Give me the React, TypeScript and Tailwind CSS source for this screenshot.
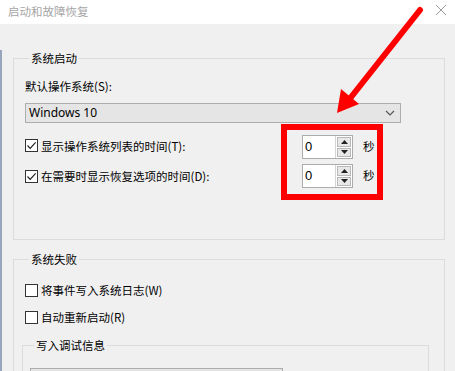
const FONT = { fontFamily: '"Noto Sans CJK SC", "Noto Sans", sans-serif' };

const CheckBox = ({ checked }: { checked: boolean }) => (
  <span className="flex h-[13px] w-[13px] shrink-0 items-center justify-center border border-[#333333] bg-white">
    {checked && (
      <svg width="11" height="11" viewBox="0 0 11 11">
        <path d="M1.5 5.5 L4.2 8.3 L9.6 2.4" fill="none" stroke="#222" strokeWidth="1.2" />
      </svg>
    )}
  </span>
);

const Check = ({ checked, label }: { checked: boolean; label: string }) => (
  <div className="flex items-center gap-[3px]">
    <CheckBox checked={checked} />
    <span className="leading-[16px]">{label}</span>
  </div>
);

const Spin = () => (
  <div className="flex h-[24px] w-[51px] border border-[#acacac] bg-white">
    <span className="flex-1 pl-[2px] text-[13px] leading-[22px]" style={{ fontFamily: '"Liberation Sans", sans-serif' }}>
      0
    </span>
    <div className="flex w-[17px] flex-col gap-[1px] border-l border-[#d4d4d4] p-[1px]">
      <div className="flex flex-1 items-center justify-center border border-[#b8b8b8] bg-[#e8e8e8]">
        <svg width="7" height="4" viewBox="0 0 7 4">
          <path d="M0 4 L3.5 0 L7 4 Z" fill="#222" />
        </svg>
      </div>
      <div className="flex flex-1 items-center justify-center border border-[#b8b8b8] bg-[#e8e8e8]">
        <svg width="7" height="4" viewBox="0 0 7 4">
          <path d="M0 0 L3.5 4 L7 0 Z" fill="#222" />
        </svg>
      </div>
    </div>
  </div>
);

const Chevron = () => (
  <svg width="10" height="6" viewBox="0 0 10 6">
    <path d="M1 1 L5 5 L9 1" fill="none" stroke="#555" strokeWidth="1.2" />
  </svg>
);

export default function App() {
  return (
    <div className="relative h-[371px] w-[455px] overflow-hidden bg-[#f0f0f0] text-[11.5px] text-black" style={FONT}>
      {/* title bar */}
      <div className="flex h-[24px] items-center justify-between bg-white pl-[8px] pr-[8px]">
        <span className="text-[#a6a6a6]">启动和故障恢复</span>
        <svg width="12" height="12" viewBox="0 0 12 12" className="-mt-[4px]">
          <path d="M1 1 L11 11 M11 1 L1 11" stroke="#9a9a9a" strokeWidth="1" />
        </svg>
      </div>

      <div className="border-l-2 border-[#97a6bd] pb-[20px]">
        {/* 系统启动 */}
        <fieldset className="ml-[11px] mt-[26px] w-[432px] border border-[#dcdcdc] pb-[51px] pl-[11px]">
          <legend className="ml-[4px] px-[2px] leading-[16px]">系统启动</legend>
          <div className="mt-[12px] leading-[16px]">默认操作系统(S):</div>
          <div className="mt-[9px] flex h-[20px] w-[376px] items-center justify-between border border-[#adadad] bg-[#e5e5e5] pl-[3px] pr-[5px]">
            <span className="text-[12px]" style={{ fontFamily: '"Noto Sans", sans-serif' }}>
              Windows 10
            </span>
            <Chevron />
          </div>
          <div className="mt-[12px] flex items-center">
            <div className="-mt-[3px] w-[277px]">
              <Check checked label="显示操作系统列表的时间(T):" />
            </div>
            <Spin />
            <span className="ml-[10px]">秒</span>
          </div>
          <div className="mt-[5px] flex items-center">
            <div className="w-[277px]">
              <Check checked label="在需要时显示恢复选项的时间(D):" />
            </div>
            <Spin />
            <span className="ml-[10px]">秒</span>
          </div>
        </fieldset>

        {/* 系统失败 */}
        <fieldset className="ml-[11px] mt-[11px] w-[432px] border border-[#dcdcdc] pl-[11px]">
          <legend className="ml-[4px] px-[2px] leading-[16px]">系统失败</legend>
          <div className="mt-[15px]">
            <Check checked={false} label="将事件写入系统日志(W)" />
          </div>
          <div className="mt-[11px]">
            <Check checked={false} label="自动重新启动(R)" />
          </div>
          <fieldset className="-ml-[3px] mt-[12px] w-[407px] border border-[#dcdcdc] pb-[10px] pl-[7px]">
            <legend className="ml-[4px] px-[2px] leading-[16px]">写入调试信息</legend>
            <div className="mt-[15px] h-[20px] w-[253px] border border-[#adadad] bg-[#e5e5e5]" />
          </fieldset>
        </fieldset>
      </div>

      {/* annotation overlay */}
      <div className="absolute left-[281px] top-[124px] h-[76px] w-[102px] border-[6px] border-[#ff0000]" />
      <svg className="absolute left-0 top-0" width="455" height="371" viewBox="0 0 455 371">
        <path d="M420 10 L348 101" stroke="#ff0000" strokeWidth="6" strokeLinecap="round" />
        <path d="M337 113 L341 89 L359 104 Z" fill="#ff0000" />
      </svg>
    </div>
  );
}
